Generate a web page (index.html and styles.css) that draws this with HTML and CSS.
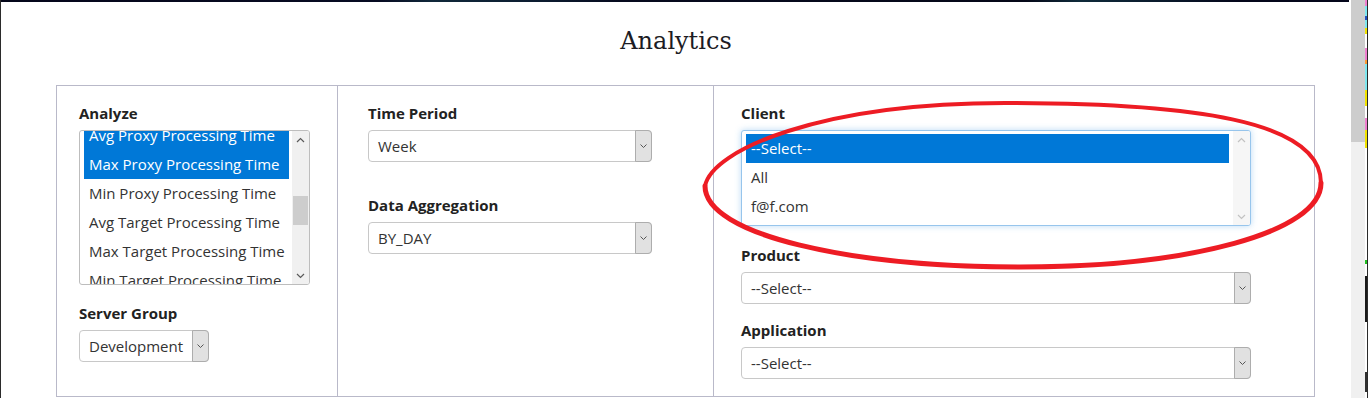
FILE: index.html
```html
<!DOCTYPE html>
<html lang="en">
<head>
<meta charset="utf-8">
<title>Analytics</title>
<link rel="stylesheet" href="styles.css">
</head>
<body>
<div class="screen">
  <div class="page">
    <div class="topbar"></div>
    <h1 class="title">Analytics</h1>
    <div class="panel">
      <div class="col col-a">
        <label class="lbl">Analyze</label>
        <div class="listbox lb-analyze">
          <div class="lb-items">
            <div class="lb-scrolled">
              <div class="opt sel">Avg Proxy Processing Time</div>
              <div class="opt sel">Max Proxy Processing Time</div>
              <div class="opt">Min Proxy Processing Time</div>
              <div class="opt">Avg Target Processing Time</div>
              <div class="opt">Max Target Processing Time</div>
              <div class="opt">Min Target Processing Time</div>
            </div>
          </div>
          <div class="sb">
            <div class="sb-btn"><svg width="9" height="6" viewBox="0 0 9 6"><path d="M1 5 L4.5 1.5 L8 5" fill="none" stroke="#5a5a5a" stroke-width="1.2"/></svg></div>
            <div class="sb-track"><div class="sb-thumb thumb-analyze"></div></div>
            <div class="sb-btn"><svg width="9" height="6" viewBox="0 0 9 6"><path d="M1 1 L4.5 4.5 L8 1" fill="none" stroke="#5a5a5a" stroke-width="1.2"/></svg></div>
          </div>
        </div>
        <label class="lbl gap-server">Server Group</label>
        <div class="select w-server">
          <div class="select-val">Development</div>
          <div class="select-btn"><svg width="9" height="6" viewBox="0 0 9 6"><path d="M1.5 1.5 L4.5 4.5 L7.5 1.5" fill="none" stroke="#555" stroke-width="1"/></svg></div>
        </div>
      </div>
      <div class="col col-b">
        <label class="lbl">Time Period</label>
        <div class="select w-mid">
          <div class="select-val">Week</div>
          <div class="select-btn"><svg width="9" height="6" viewBox="0 0 9 6"><path d="M1.5 1.5 L4.5 4.5 L7.5 1.5" fill="none" stroke="#555" stroke-width="1"/></svg></div>
        </div>
        <label class="lbl gap-agg">Data Aggregation</label>
        <div class="select w-mid">
          <div class="select-val">BY_DAY</div>
          <div class="select-btn"><svg width="9" height="6" viewBox="0 0 9 6"><path d="M1.5 1.5 L4.5 4.5 L7.5 1.5" fill="none" stroke="#555" stroke-width="1"/></svg></div>
        </div>
      </div>
      <div class="col col-c">
        <label class="lbl">Client</label>
        <div class="listbox lb-client">
          <div class="lb-items lb-items-client">
            <div class="opt sel">--Select--</div>
            <div class="opt">All</div>
            <div class="opt">f@f.com</div>
          </div>
          <div class="sb sb-light">
            <div class="sb-btn"><svg width="9" height="6" viewBox="0 0 9 6"><path d="M1 5 L4.5 1.5 L8 5" fill="none" stroke="#c2c2c2" stroke-width="1.2"/></svg></div>
            <div class="sb-track"></div>
            <div class="sb-btn"><svg width="9" height="6" viewBox="0 0 9 6"><path d="M1 1 L4.5 4.5 L8 1" fill="none" stroke="#c2c2c2" stroke-width="1.2"/></svg></div>
          </div>
        </div>
        <label class="lbl gap-product">Product</label>
        <div class="select w-wide">
          <div class="select-val">--Select--</div>
          <div class="select-btn"><svg width="9" height="6" viewBox="0 0 9 6"><path d="M1.5 1.5 L4.5 4.5 L7.5 1.5" fill="none" stroke="#555" stroke-width="1"/></svg></div>
        </div>
        <label class="lbl gap-app">Application</label>
        <div class="select w-wide">
          <div class="select-val">--Select--</div>
          <div class="select-btn"><svg width="9" height="6" viewBox="0 0 9 6"><path d="M1.5 1.5 L4.5 4.5 L7.5 1.5" fill="none" stroke="#555" stroke-width="1"/></svg></div>
        </div>
      </div>
    </div>
  </div>
  <div class="vscroll"><div class="vthumb"></div></div>
  <div class="edge"></div>
  <svg class="annot" width="1368" height="398" viewBox="0 0 1368 398">
    <path d="M705 186 C712 150 820 103 1005 103 C1190 103 1321 120 1321 183" fill="none" stroke="#ed1c24" stroke-width="4" stroke-linecap="round"/>
    <path d="M1321 183 C1321 232 1190 267 1020 267 C850 267 705 235 705 186" fill="none" stroke="#ed1c24" stroke-width="5" stroke-linecap="round"/>
  </svg>
</div>
</body>
</html>
```
FILE: styles.css
```css
html, body {
  margin: 0;
  padding: 0;
  background: #fff;
  overflow: hidden;
}

.screen {
  position: relative;
  display: flex;
  width: 1368px;
  height: 398px;
  overflow: hidden;
  font-family: "Open Sans", "Noto Sans", sans-serif;
}

.page {
  width: 1351px;
  height: 398px;
  box-sizing: border-box;
  border-left: 1px solid #2b2b2b;
  background: #fff;
}

.topbar {
  height: 2px;
  margin-right: 2px;
  background: linear-gradient(90deg, #04061a 0%, #070b22 28%, #10283a 32%, #0c1c30 40%, #060a1e 46%, #050818 76%, #0f2a3a 80%, #0a1a2c 86%, #04061a 92%, #04061a 100%);
}

.title {
  margin: 24px 0 0 0;
  font-family: "DejaVu Serif", "Liberation Serif", serif;
  font-weight: normal;
  font-size: 24px;
  line-height: 30px;
  color: #1c1c24;
  text-align: center;
}

.panel {
  display: flex;
  margin: 29px 0 0 55px;
  width: 1259px;
  box-sizing: border-box;
  border: 1px solid #b9b9c9;
}

.col {
  box-sizing: border-box;
  padding-top: 17px;
}

.col-a {
  width: 281px;
  padding-left: 22px;
  border-right: 1px solid #b9b9c9;
}

.col-b {
  width: 376px;
  padding-left: 30px;
  border-right: 1px solid #b9b9c9;
}

.col-c {
  width: 600px;
  padding-left: 27px;
  padding-bottom: 17px;
}

.lbl {
  display: block;
  font-size: 15px;
  font-weight: 700;
  line-height: 20px;
  color: #222;
  margin-bottom: 7px;
}

.gap-server { margin-top: 18px; }
.gap-agg { margin-top: 33px; }
.gap-product { margin-top: 19px; }
.gap-app { margin-top: 16px; }

/* listboxes */
.listbox {
  display: flex;
  box-sizing: border-box;
  border: 1px solid #bdbdbd;
  border-radius: 3px;
  background: #fff;
  overflow: hidden;
}

.lb-analyze {
  width: 231px;
  height: 155px;
}

.lb-client {
  width: 510px;
  height: 96px;
  border-color: #97c5ec;
  box-shadow: 0 0 6px rgba(102, 175, 233, 0.45);
}

.lb-items {
  flex: 1;
  min-width: 0;
  overflow: hidden;
  padding: 0 3px 0 4px;
}

.lb-items-client {
  padding: 3px 4px 0 4px;
}

.lb-scrolled {
  margin-top: -10px;
}

.opt {
  height: 29px;
  line-height: 29px;
  padding-left: 5px;
  font-size: 15px;
  color: #333;
  white-space: nowrap;
}

.opt.sel {
  background: #0078d7;
  color: #fff;
}

.sb {
  width: 17px;
  flex: none;
  display: flex;
  flex-direction: column;
  background: #f0f0f0;
}

.sb-light {
  background: #f6f6f6;
}

.sb-btn {
  height: 17px;
  flex: none;
  display: flex;
  align-items: center;
  justify-content: center;
}

.sb-track {
  flex: 1;
}

.sb-thumb {
  margin: 0 1px;
  background: #cdcdcd;
}

.thumb-analyze {
  margin-top: 48px;
  height: 29px;
}

/* selects */
.select {
  display: flex;
  height: 32px;
  box-sizing: border-box;
  border: 1px solid #c8c8c8;
  border-radius: 4px;
  background: #fff;
}

.w-server { width: 130px; }
.w-mid { width: 284px; }
.w-wide { width: 510px; }

.select-val {
  flex: 1;
  padding-left: 9px;
  line-height: 30px;
  font-size: 15px;
  color: #333;
  white-space: nowrap;
  overflow: hidden;
}

.select-btn {
  width: 17px;
  flex: none;
  box-sizing: border-box;
  margin: -1px -1px -1px 0;
  border: 1px solid #adadad;
  border-radius: 0 4px 4px 0;
  background: #e1e1e1;
  display: flex;
  align-items: center;
  justify-content: center;
}

/* window scrollbar & edge */
.vscroll {
  width: 14px;
  flex: none;
  background: #f0f0f0;
}

.vthumb {
  height: 142px;
  background: #cdcdcd;
}

.edge {
  width: 3px;
  flex: none;
  background:
    linear-gradient(90deg, transparent 0 2px, #2a2a2a 2px 3px),
    linear-gradient(180deg, #f07fd0 0 6px, #7fe8f0 6px 16px, #2050c0 16px 20px, #7fe8f0 20px 28px, #f2e400 28px 34px, #ffffff 34px 48px, #f07fd0 48px 60px, #ff9a30 60px 64px, #7fe8f0 64px 90px, #f2e400 90px 106px, #ffffff 106px 118px, #f07fd0 118px 130px, #f2e400 130px 148px, #ffffff 148px 260px, #20c020 260px 264px, #ffffff 264px 276px, #1a1a1a 276px 322px, #ffffff 322px 372px, #303030 372px 392px, #ffffff 392px);
}

/* annotation overlay */
.annot {
  position: absolute;
  left: 0;
  top: 0;
  pointer-events: none;
}
```
